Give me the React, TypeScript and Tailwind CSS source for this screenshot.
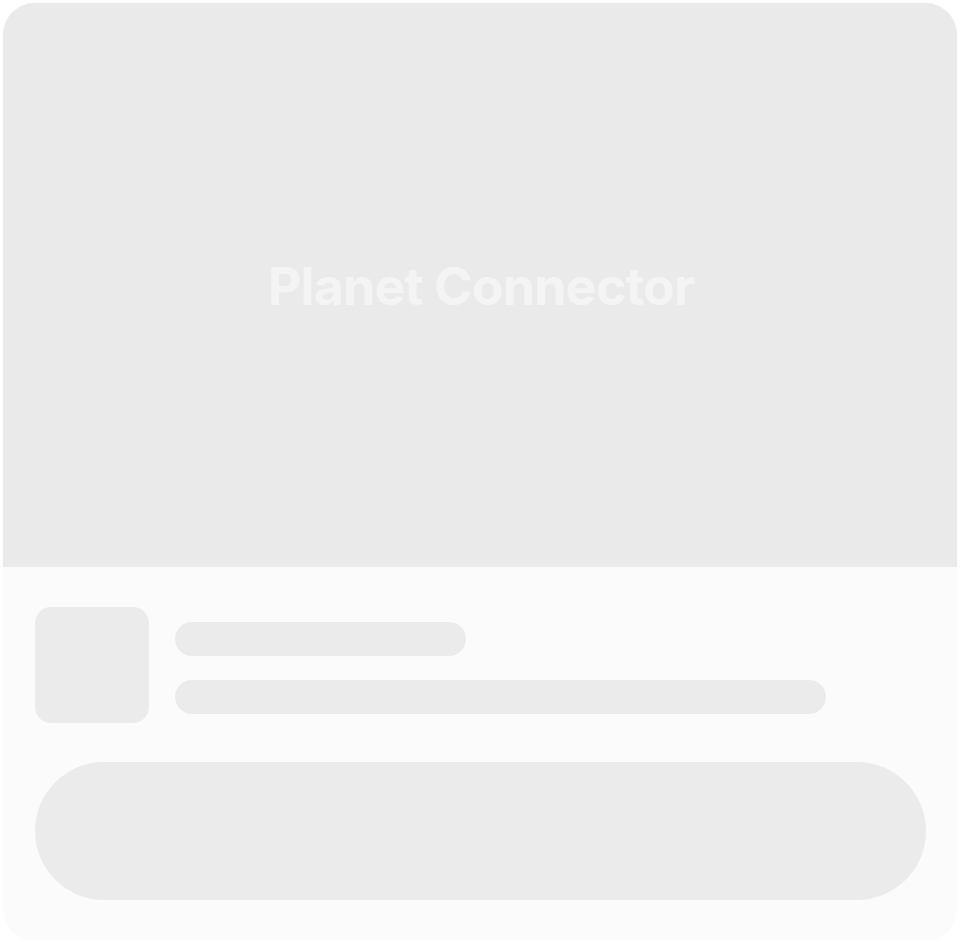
export default function App() {
  return (
    <div className="min-h-screen bg-white p-[3px]">
      <div className="w-[954px] overflow-hidden rounded-[32px] bg-[#fbfbfb] shadow-[0_0_2px_rgba(0,0,0,0.04)]">
        <div className="flex h-[564px] items-center justify-center bg-[#eaeaea] pt-[4px] pl-[2px]">
          <h1 className="font-['Inter',sans-serif] text-[52px] font-bold tracking-[-0.9px] text-[#f4f4f4]">
            Planet Connector
          </h1>
        </div>

        <div className="pt-10 pr-[31px] pb-10 pl-8">
          <div className="flex items-start gap-[26px]">
            <div className="h-[116px] w-[114px] shrink-0 rounded-2xl bg-[#ebebeb]"></div>
            <div className="flex flex-1 flex-col gap-6 pt-[15px]">
              <div className="h-[34px] w-[291px] rounded-full bg-[#ebebeb]"></div>
              <div className="h-[34px] w-[651px] rounded-full bg-[#ebebeb]"></div>
            </div>
          </div>

          <div className="mt-[39px] h-[138px] w-full rounded-full bg-[#ebebeb]"></div>
        </div>
      </div>
    </div>
  );
}
